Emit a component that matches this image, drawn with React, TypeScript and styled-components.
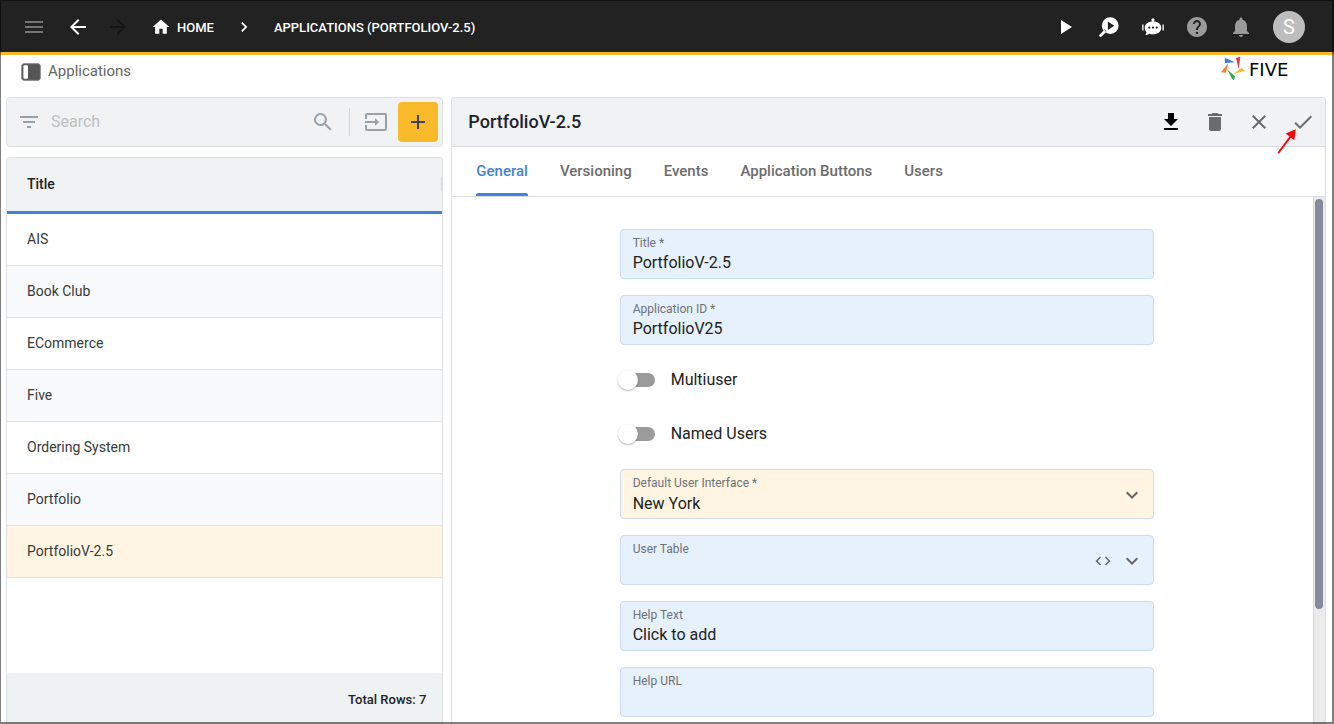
import React from 'react';
import styled, { createGlobalStyle } from 'styled-components';
import {
  MdMenu, MdArrowBack, MdArrowForward, MdHome, MdNavigateNext, MdPlayArrow, MdHelp,
  MdNotifications, MdFilterList, MdSearch, MdInput, MdAdd, MdGetApp, MdDelete, MdClose,
  MdCheck, MdCode, MdExpandMore,
} from 'react-icons/md';

const GlobalStyle = createGlobalStyle`
  *, *::before, *::after { box-sizing: border-box; }
  body {
    margin: 0;
    background: #fff;
    color: #222;
    font-family: Roboto, "Liberation Sans", sans-serif;
    font-size: 14px;
  }
  button, input, select { font: inherit; color: inherit; }
`;

const Page = styled.div`
  height: 100vh;
  min-height: 480px;
  display: flex;
  flex-direction: column;
  overflow: hidden;
  position: relative;
  &::after {
    content: "";
    position: absolute;
    inset: 0;
    border: solid rgba(0, 0, 0, 0.5);
    border-width: 1px 2px 2px 1px;
    pointer-events: none;
  }
`;

const TopBar = styled.header`
  flex: none;
  height: 55px;
  padding: 2px 23px 0 12px;
  border-bottom: 3px solid #fbb829;
  background: #222;
  color: #fff;
  display: flex;
  align-items: center;
`;

const IconButton = styled.button<{ $color?: string; $width?: number }>`
  width: ${(p) => p.$width ?? 44}px;
  height: 44px;
  padding: 0;
  border: 0;
  background: none;
  color: ${(p) => p.$color ?? '#fff'};
  display: flex;
  align-items: center;
  justify-content: center;
  flex: none;
`;

const Crumbs = styled.nav`
  flex: 1;
  min-width: 0;
  margin-left: 15px;
  display: flex;
  align-items: center;
  font-size: 13px;
  font-weight: 500;
  text-transform: uppercase;
  white-space: nowrap;
`;

const CrumbLink = styled.a`
  color: #fff;
  text-decoration: none;
  display: flex;
  align-items: center;
  gap: 6px;
`;

const CrumbSeparator = styled.span`
  display: flex;
  margin: 0 20px;
`;

const ActionGroup = styled.div`
  display: flex;
  margin-right: 4px;
`;

const Avatar = styled.span`
  width: 32px;
  height: 32px;
  border-radius: 50%;
  background: #bdbdbd;
  font-size: 20px;
  display: flex;
  align-items: center;
  justify-content: center;
`;

const SubBar = styled.div`
  flex: none;
  height: 42px;
  padding: 0 24px 8px 20px;
  display: flex;
  align-items: center;
  justify-content: space-between;
`;

const ViewName = styled.div`
  display: flex;
  align-items: center;
  gap: 6px;
  color: #666;
  font-size: 15px;
`;

const ViewLabel = styled.span`
  padding-bottom: 2px;
`;

const Brand = styled.div`
  display: flex;
  align-items: center;
  gap: 4px;
  width: 89px;
  padding-bottom: 6px;
  color: #000;
  font-family: "DejaVu Sans", sans-serif;
  font-size: 18px;
  line-height: 26px;
`;

const BrandName = styled.span`
  padding-top: 2px;
`;

const Workspace = styled.main`
  flex: 1;
  min-height: 0;
  padding: 0 8px 0 6px;
  display: grid;
  grid-template-columns: minmax(0, 1fr) minmax(0, 2fr);
  gap: 8px;
`;

const ListColumn = styled.section`
  min-height: 0;
  display: flex;
  flex-direction: column;
  gap: 10px;
`;

const SearchBar = styled.form`
  flex: none;
  height: 50px;
  padding: 0 4px 0 10px;
  border: 1px solid #dfe0e2;
  border-radius: 4px;
  background: #f1f2f4;
  color: #98a1a8;
  display: flex;
  align-items: center;
  gap: 10px;
`;

const SearchInput = styled.input`
  flex: 1;
  min-width: 0;
  padding: 0 0 2px;
  border: 0;
  outline: 0;
  background: none;
  font-size: 16px;
  &::placeholder { color: #bcbfc3; opacity: 1; }
`;

const SearchDivider = styled.span`
  width: 1px;
  height: 28px;
  margin: 0 4px;
  background: #d3d5d8;
`;

const PlainButton = styled.button`
  padding: 0;
  border: 0;
  background: none;
  display: flex;
`;

const AddButton = styled.button`
  width: 40px;
  height: 40px;
  padding: 0;
  border: 0;
  border-radius: 4px;
  background: #f8b92b;
  color: #444;
  display: flex;
  align-items: center;
  justify-content: center;
`;

const TablePanel = styled.div`
  flex: 1;
  min-height: 0;
  border: 1px solid #dfe0e2;
  border-bottom: 0;
  border-radius: 4px 4px 0 0;
  overflow: hidden;
  display: flex;
  flex-direction: column;
`;

const TableScroll = styled.div`
  flex: 1;
  min-height: 0;
  overflow: auto;
  scrollbar-width: none;
`;

const Table = styled.table`
  width: 100%;
  border-collapse: separate;
  border-spacing: 0;
`;

const HeadCell = styled.th`
  height: 56px;
  padding: 0 0 2px 20px;
  border-bottom: 3px solid #4484d8;
  background: #f1f2f4;
  text-align: left;
  font-weight: 500;
`;

const HeadContent = styled.div`
  display: flex;
  align-items: center;
  justify-content: space-between;
  &::after {
    content: "";
    width: 1px;
    height: 14px;
    background: #d9dadc;
  }
`;

const Row = styled.tr<{ $selected: boolean }>`
  background: ${(p) => (p.$selected ? '#fff5e2' : '#fff')};
  &:nth-child(even) { background: #f8f9fb; }
`;

const Cell = styled.td`
  height: 52px;
  padding: 0 20px 2px;
  border-bottom: 1px solid #e0e2e4;
  color: #3a3a3a;
`;

const TableFooter = styled.div`
  flex: none;
  height: 51px;
  padding: 2px 16px 0;
  background: #eef2f3;
  font-size: 13px;
  font-weight: 500;
  display: flex;
  align-items: center;
  justify-content: flex-end;
`;

const DetailPanel = styled.section`
  min-width: 0;
  min-height: 0;
  border: 1px solid #dfe0e2;
  border-bottom: 0;
  border-radius: 4px 4px 0 0;
  display: flex;
  flex-direction: column;
`;

const DetailHeader = styled.div`
  flex: none;
  height: 49px;
  padding-left: 16px;
  border-bottom: 1px solid #dcdde0;
  border-radius: 3px 3px 0 0;
  background: #f1f2f4;
  display: flex;
  align-items: center;
`;

const DetailTitle = styled.h1`
  flex: 1;
  margin: 0;
  padding-bottom: 2px;
  color: #1b2230;
  font-size: 18px;
  font-weight: 500;
`;

const CheckSlot = styled.div`
  position: relative;
`;

const Pointer = styled.svg`
  position: absolute;
  left: -5px;
  top: 28px;
  pointer-events: none;
`;

const Tabs = styled.div`
  flex: none;
  height: 50px;
  padding-left: 24px;
  border-bottom: 1px solid #dcdde0;
  display: flex;
  gap: 32px;
`;

const Tab = styled.button<{ $active: boolean }>`
  padding: 0;
  border: 0;
  background: none;
  color: ${(p) => (p.$active ? '#4484d8' : '#6c6c6c')};
  font-size: 15px;
  font-weight: 500;
  white-space: nowrap;
  display: flex;
  flex-direction: column;
  justify-content: space-between;
  &::before { content: ""; height: 1px; }
  &::after {
    content: "";
    width: 100%;
    height: 3px;
    border-radius: 2px 2px 0 0;
    background: ${(p) => (p.$active ? '#4484d8' : 'transparent')};
  }
`;

const DetailBody = styled.div`
  flex: 1;
  min-height: 0;
  display: flex;
`;

const FormScroll = styled.div`
  flex: 1;
  min-width: 0;
  padding: 32px 16px 32px 24px;
  overflow-y: auto;
  scrollbar-width: none;
`;

const ScrollTrack = styled.div`
  flex: none;
  width: 12px;
  padding: 2px 2px 0 1px;
  border-left: 1px solid #d6d6d6;
  background: #ebebeb;
`;

const ScrollThumb = styled.div`
  width: 8px;
  height: 78%;
  border-radius: 4px;
  background: #848b9c;
`;

const Form = styled.form`
  max-width: 534px;
  margin: 0 auto;
  display: flex;
  flex-direction: column;
  gap: 16px;
`;

const FieldBox = styled.div<{ $highlight?: boolean }>`
  height: 50px;
  padding: 4px 9px 0 12px;
  border: 1px solid #cbdced;
  border-radius: 4px;
  background: ${(p) => (p.$highlight ? '#fff5e2' : '#e7f1fc')};
  display: flex;
`;

const FieldMain = styled.div`
  flex: 1;
  min-width: 0;
  display: flex;
  flex-direction: column;
`;

const FieldLabel = styled.label`
  color: #6d7278;
  font-size: 12px;
  line-height: 18px;
`;

const FieldInput = styled.input`
  width: 100%;
  height: 22px;
  padding: 0;
  border: 0;
  outline: 0;
  background: none;
  font-size: 16px;
  line-height: 22px;
`;

const FieldSelect = styled.select`
  width: 100%;
  height: 24px;
  padding: 0;
  border: 0;
  outline: 0;
  appearance: none;
  background: none;
  font-size: 16px;
  line-height: 24px;
`;

const FieldIcons = styled.div`
  display: flex;
  align-items: center;
  gap: 8px;
  padding-bottom: 2px;
  color: #666;
`;

const SwitchRow = styled.label`
  height: 38px;
  display: flex;
  align-items: center;
  gap: 16px;
  font-size: 16px;
`;

const SwitchText = styled.span`
  padding-bottom: 2px;
`;

const Switch = styled.input`
  appearance: none;
  width: 35px;
  height: 14px;
  margin: 0;
  border-radius: 7px;
  background: #9b9b9b;
  display: flex;
  align-items: center;
  &::before {
    content: "";
    width: 20px;
    height: 20px;
    margin-left: -2px;
    flex: none;
    border-radius: 50%;
    background: #fff;
    box-shadow: 0 1px 2px rgba(0, 0, 0, 0.3);
  }
  &:checked { background: #4484d8; }
  &:checked::before { margin-left: 17px; }
`;

const InspectIcon = () => (
  <svg width="24" height="24" viewBox="0 0 24 24" aria-hidden="true">
    <path d="M3.6 20.6 8.4 15.8" stroke="#fff" strokeWidth="2.8" strokeLinecap="round" />
    <circle cx="13.2" cy="10.6" r="8.4" fill="#fff" />
    <path d="M7.2 14.4a7.4 7.4 0 0 0 2.2 2.3" stroke="#222" strokeWidth="0.8" fill="none" />
    <path d="M10.9 6.4v8.6l6.4-4.3z" fill="#222" />
  </svg>
);

const BotIcon = () => (
  <svg width="24" height="24" viewBox="0 0 24 24" aria-hidden="true" fill="#fff">
    <circle cx="12" cy="4.8" r="1.6" />
    <path d="M11.2 5h1.6v3h-1.6z" />
    <path d="M12 6.4c5 0 8.3 2.6 8.3 6.3s-3.3 6.6-8.3 6.6c-1.4 0-2.6-.2-3.7-.6-1 .8-2.5 1.3-4.1 1.3.9-.8 1.3-1.8 1.2-2.9-1.1-1.200-1.700-2.700-1.700-4.400 0-3.700 3.300-6.300 8.300-6.300z" />
    <path d="M1.200 9.500h1.300v6H1.200zM21.500 9.500h1.300v6h-1.300z" />
    <g fill="#222">
      <circle cx="8.300" cy="12.600" r="1.100" />
      <circle cx="12" cy="12.600" r="1.100" />
      <circle cx="15.700" cy="12.600" r="1.100" />
    </g>
  </svg>
);

const PanelIcon = () => (
  <svg width="22" height="20" viewBox="0 0 22 20" aria-hidden="true">
    <rect x="1.800" y="1.800" width="18.400" height="16.400" rx="2" fill="#555" stroke="#777" />
    <rect x="3.400" y="3.200" width="4.600" height="13.600" rx="1" fill="#fff" />
  </svg>
);

const PinwheelLogo = () => (
  <svg width="24" height="26" viewBox="0 0 72 78" aria-hidden="true">
    <path d="M11 5 42 19 12 21z" fill="#3f7fd8" />
    <path d="M45 6 58 2 53 39z" fill="#e23b3b" />
    <path d="M22 21 15 50 0 49z" fill="#f58233" />
    <path d="M37 54 62 35 72 44z" fill="#f9bb2d" />
    <path d="M18 40 42 61 39 73 34 70z" fill="#35a853" />
  </svg>
);

const applications = ['AIS', 'Book Club', 'ECommerce', 'Five', 'Ordering System', 'Portfolio', 'PortfolioV-2.5'];
const tabs = ['General', 'Versioning', 'Events', 'Application Buttons', 'Users'];

interface TextFieldProps {
  id: string;
  label: string;
  value?: string;
}

const TextField = ({ id, label, value = '' }: TextFieldProps) => (
  <FieldBox>
    <FieldMain>
      <FieldLabel htmlFor={id}>{label}</FieldLabel>
      <FieldInput id={id} type="text" defaultValue={value} />
    </FieldMain>
  </FieldBox>
);

interface SelectFieldProps extends TextFieldProps {
  highlight?: boolean;
  code?: boolean;
}

const SelectField = ({ id, label, value = '', highlight, code }: SelectFieldProps) => (
  <FieldBox $highlight={highlight}>
    <FieldMain>
      <FieldLabel htmlFor={id}>{label}</FieldLabel>
      <FieldSelect id={id} defaultValue={value}>
        <option value={value}>{value}</option>
      </FieldSelect>
    </FieldMain>
    <FieldIcons>
      {code && (
        <PlainButton type="button" aria-label="Edit code">
          <MdCode size={18} color="#666" />
        </PlainButton>
      )}
      <MdExpandMore size={24} />
    </FieldIcons>
  </FieldBox>
);

export default function App() {
  const [activeTab, setActiveTab] = React.useState('General');
  const [selected, setSelected] = React.useState('PortfolioV-2.5');

  return (
    <Page>
      <GlobalStyle />
      <TopBar>
        <IconButton aria-label="Menu" $color="#757575"><MdMenu size={24} /></IconButton>
        <IconButton aria-label="Back"><MdArrowBack size={24} /></IconButton>
        <IconButton aria-label="Forward" $color="#151515" $width={36} disabled><MdArrowForward size={24} /></IconButton>
        <Crumbs aria-label="Breadcrumb">
          <CrumbLink href="#home"><MdHome size={20} />Home</CrumbLink>
          <CrumbSeparator><MdNavigateNext size={20} /></CrumbSeparator>
          <CrumbLink href="#applications">Applications (PortfolioV-2.5)</CrumbLink>
        </Crumbs>
        <ActionGroup>
          <IconButton aria-label="Run"><MdPlayArrow size={24} /></IconButton>
          <IconButton aria-label="Inspect"><InspectIcon /></IconButton>
          <IconButton aria-label="Assistant"><BotIcon /></IconButton>
          <IconButton aria-label="Help" $color="#9a9a9a"><MdHelp size={24} /></IconButton>
          <IconButton aria-label="Notifications" $color="#9a9a9a"><MdNotifications size={24} /></IconButton>
        </ActionGroup>
        <IconButton aria-label="Account"><Avatar>S</Avatar></IconButton>
      </TopBar>

      <SubBar>
        <ViewName><PanelIcon /><ViewLabel>Applications</ViewLabel></ViewName>
        <Brand><PinwheelLogo /><BrandName>FIVE</BrandName></Brand>
      </SubBar>

      <Workspace>
        <ListColumn>
          <SearchBar role="search">
            <MdFilterList size={24} />
            <SearchInput type="text" aria-label="Search" placeholder="Search" />
            <PlainButton type="button" aria-label="Run search"><MdSearch size={24} color="#98a1a8" /></PlainButton>
            <SearchDivider />
            <PlainButton type="button" aria-label="Import"><MdInput size={24} color="#98a1a8" /></PlainButton>
            <AddButton type="button" aria-label="Add"><MdAdd size={24} /></AddButton>
          </SearchBar>
          <TablePanel>
            <TableScroll>
              <Table>
                <thead>
                  <tr><HeadCell scope="col"><HeadContent>Title</HeadContent></HeadCell></tr>
                </thead>
                <tbody>
                  {applications.map((name) => (
                    <Row key={name} $selected={name === selected} onClick={() => setSelected(name)}>
                      <Cell>{name}</Cell>
                    </Row>
                  ))}
                </tbody>
              </Table>
            </TableScroll>
            <TableFooter>Total Rows: {applications.length}</TableFooter>
          </TablePanel>
        </ListColumn>

        <DetailPanel>
          <DetailHeader>
            <DetailTitle>PortfolioV-2.5</DetailTitle>
            <IconButton aria-label="Download" $color="#000"><MdGetApp size={24} /></IconButton>
            <IconButton aria-label="Delete" $color="#6b6b6b"><MdDelete size={24} /></IconButton>
            <IconButton aria-label="Cancel" $color="#6b6b6b"><MdClose size={24} /></IconButton>
            <CheckSlot>
              <IconButton aria-label="Save" $color="#6b6b6b"><MdCheck size={24} /></IconButton>
              <Pointer width="22" height="26" viewBox="0 0 22 26" aria-hidden="true">
                <path d="M2.300 25 15 8" stroke="#f00" strokeWidth="2" />
                <path d="M19.700 1.300 9.700 5.500 18.300 12.300z" fill="#f00" />
              </Pointer>
            </CheckSlot>
          </DetailHeader>
          <Tabs role="tablist">
            {tabs.map((name) => (
              <Tab
                key={name}
                type="button"
                role="tab"
                aria-selected={name === activeTab}
                $active={name === activeTab}
                onClick={() => setActiveTab(name)}
              >
                {name}
              </Tab>
            ))}
          </Tabs>
          <DetailBody>
            <FormScroll>
              <Form>
                <TextField id="title" label="Title *" value="PortfolioV-2.5" />
                <TextField id="application-id" label="Application ID *" value="PortfolioV25" />
                <SwitchRow><Switch type="checkbox" role="switch" /><SwitchText>Multiuser</SwitchText></SwitchRow>
                <SwitchRow><Switch type="checkbox" role="switch" /><SwitchText>Named Users</SwitchText></SwitchRow>
                <SelectField id="default-ui" label="Default User Interface *" value="New York" highlight />
                <SelectField id="user-table" label="User Table" code />
                <TextField id="help-text" label="Help Text" value="Click to add" />
                <TextField id="help-url" label="Help URL" />
              </Form>
            </FormScroll>
            <ScrollTrack aria-hidden="true"><ScrollThumb /></ScrollTrack>
          </DetailBody>
        </DetailPanel>
      </Workspace>
    </Page>
  );
}
